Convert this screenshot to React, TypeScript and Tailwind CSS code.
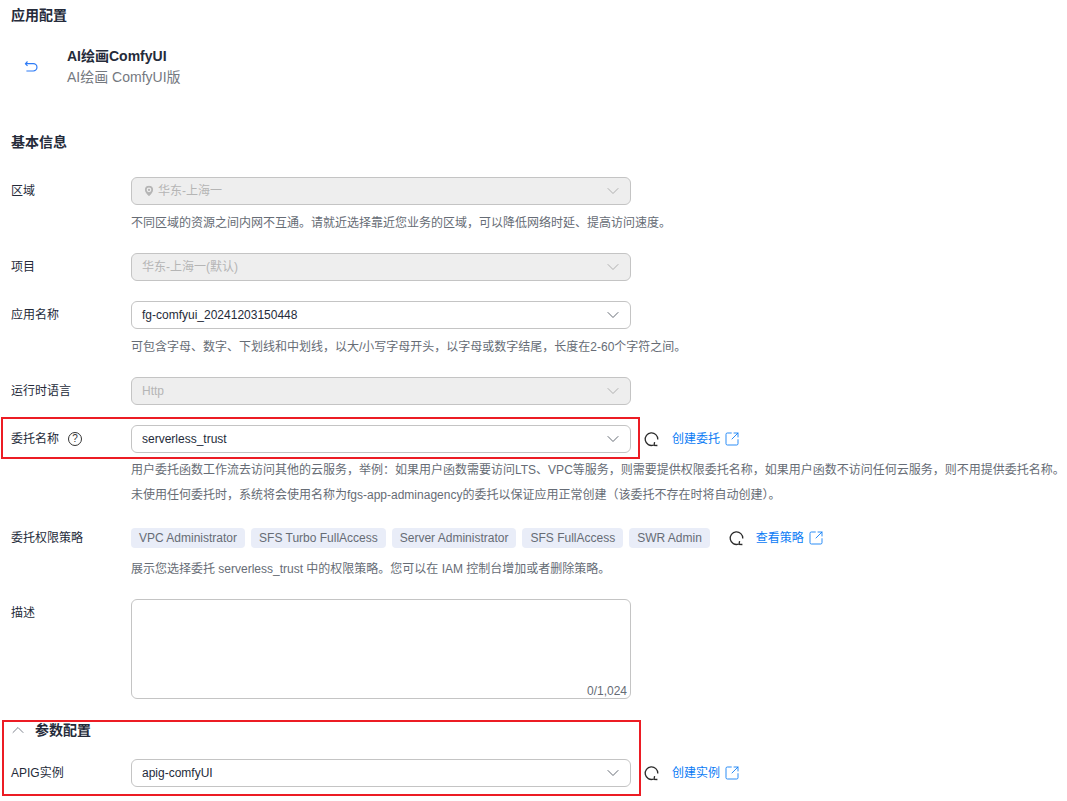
import React from "react";
import { ChevronDown, ChevronUp, MapPin, SquareArrowOutUpRight } from "lucide-react";

const FONT = "font-['Liberation_Sans','Noto_Sans_CJK_SC',sans-serif]";

// small reload ring used next to the selects
const RefreshIcon = () => (
  <svg width="16" height="16" viewBox="0 0 16 16" fill="none" stroke="#2b2b2b" strokeWidth="1.3" className="block">
    <path d="M13.8 8.4A6.3 6.3 0 1 0 9.4 14.2" />
    <path d="M10.6 11.2l-0.6 3.2 3.4 0.1" />
  </svg>
);

const ExternalLink = ({ label }: { label: string }) => (
  <a className="flex items-center text-xs text-[#0a7bf5]">
    {label}
    <SquareArrowOutUpRight size={16} strokeWidth={1.3} className="ml-[4px]" />
  </a>
);

const Hint = ({ children, className = "" }: { children: React.ReactNode; className?: string }) => (
  <p className={`h-5 text-xs leading-5 text-[#666c75] whitespace-nowrap ${className}`}>{children}</p>
);

const Row = ({
  label,
  extra,
  className = "",
  children,
}: {
  label: string;
  extra?: React.ReactNode;
  className?: string;
  children: React.ReactNode;
}) => (
  <div className={`flex ${className}`}>
    <div className="flex h-7 w-[120px] shrink-0 items-center text-xs text-[#252b3a]">
      {label}
      {extra}
    </div>
    <div className="min-w-0">{children}</div>
  </div>
);

const Select = ({
  value,
  disabled,
  icon,
}: {
  value: string;
  disabled?: boolean;
  icon?: boolean;
}) => (
  <div
    className={`flex h-7 w-[500px] items-center rounded-md border border-[#c4c4c4] pl-[10px] pr-[7px] text-xs ${
      disabled ? "bg-[#eeeeee] text-[#b5b5b5]" : "bg-white text-[#252b3a]"
    }`}
  >
    {icon && <MapPin size={14} fill="#b5b5b5" stroke="#eeeeee" strokeWidth={2} className="mr-[2px]" />}
    <span className="flex-1">{value}</span>
    <ChevronDown size={20} strokeWidth={1.2} className={disabled ? "text-[#b0b0b0]" : "text-[#666c75]"} />
  </div>
);

const TAGS = [
  "VPC Administrator",
  "SFS Turbo FullAccess",
  "Server Administrator",
  "SFS FullAccess",
  "SWR Admin",
];

export default function App() {
  return (
    <div className={`relative h-[801px] w-[1067px] overflow-hidden bg-white pl-[11px] pt-[5px] ${FONT}`}>
      <h2 className="h-5 text-sm font-bold leading-5 text-[#252b3a]">应用配置</h2>

      {/* template summary */}
      <div className="mt-[20px] flex h-[42px] items-center">
        <svg width="14" height="14" viewBox="0 0 14 14" fill="none" stroke="#2f7cf6" strokeWidth="1.2" className="ml-[13px] mt-[2px]">
          <path d="M3.5 1.5L1.5 3.7l2 2.1" />
          <path d="M1.7 3.7h7.6a3 3 0 0 1 0 7.3H2.4" />
        </svg>
        <div className="ml-[29px]">
          <div className="h-5 text-sm font-bold leading-5 text-[#252b3a]">AI绘画ComfyUI</div>
          <div className="mt-px h-5 text-sm leading-5 text-[#75797f]">AI绘画 ComfyUI版</div>
        </div>
      </div>

      <h2 className="mt-[45px] h-5 text-sm font-bold leading-5 text-[#252b3a]">基本信息</h2>

      <Row label="区域" className="mt-[25px]">
        <Select value="华东-上海一" disabled icon />
        <Hint className="mt-[8px]">不同区域的资源之间内网不互通。请就近选择靠近您业务的区域，可以降低网络时延、提高访问速度。</Hint>
      </Row>

      <Row label="项目" className="mt-[20px]">
        <Select value="华东-上海一(默认)" disabled />
      </Row>

      <Row label="应用名称" className="mt-5">
        <Select value="fg-comfyui_20241203150448" />
        <Hint className="mt-[8px]">可包含字母、数字、下划线和中划线，以大/小写字母开头，以字母或数字结尾，长度在2-60个字符之间。</Hint>
      </Row>

      <Row label="运行时语言" className="mt-[20px]">
        <Select value="Http" disabled />
      </Row>

      <Row
        label="委托名称"
        className="mt-5"
        extra={
          <span className="ml-[9px] flex h-[14px] w-[14px] items-center justify-center rounded-full border border-[#333] text-[10px] leading-none text-[#333]">
            ?
          </span>
        }
      >
        <div className="flex items-center">
          <Select value="serverless_trust" />
          <span className="ml-[13px] mr-[12px]">
            <RefreshIcon />
          </span>
          <ExternalLink label="创建委托" />
        </div>
        <Hint className="mt-[7px]">用户委托函数工作流去访问其他的云服务，举例：如果用户函数需要访问LTS、VPC等服务，则需要提供权限委托名称，如果用户函数不访问任何云服务，则不用提供委托名称。</Hint>
        <Hint className="mt-[5px]">未使用任何委托时，系统将会使用名称为fgs-app-adminagency的委托以保证应用正常创建（该委托不存在时将自动创建）。</Hint>
      </Row>

      <Row label="委托权限策略" className="mt-[19px]">
        <div className="flex h-7 items-center">
          {TAGS.map((tag) => (
            <span key={tag} className="mr-[6px] flex h-5 items-center rounded bg-[#e9edf8] px-2 text-xs text-[#666c75]">
              {tag}
            </span>
          ))}
          <span className="ml-[13px] mr-[11px]">
            <RefreshIcon />
          </span>
          <ExternalLink label="查看策略" />
        </div>
        <Hint className="mt-[7px]">展示您选择委托 serverless_trust 中的权限策略。您可以在 IAM 控制台增加或者删除策略。</Hint>
      </Row>

      <Row label="描述" className="mt-[20px]">
        <div className="relative h-[100px] w-[500px] rounded-md border border-[#c4c4c4] bg-white">
          <span className="absolute -bottom-px right-[3px] text-xs text-[#666c75]">0/1,024</span>
        </div>
      </Row>

      <div className="mt-[21px] flex h-5 items-center text-sm font-bold text-[#252b3a]">
        <ChevronUp size={20} strokeWidth={1.2} className="-ml-[3px] mr-[7px] text-[#808590]" />
        参数配置
      </div>

      <Row label="APIG实例" className="mt-[19px]">
        <div className="flex items-center">
          <Select value="apig-comfyUI" />
          <span className="ml-[13px] mr-[12px]">
            <RefreshIcon />
          </span>
          <ExternalLink label="创建实例" />
        </div>
      </Row>

      {/* red annotation frames drawn on top of the screenshot */}
      <div className="absolute left-[1px] top-[417px] h-[42px] w-[639px] border-2 border-[#ec1c24]" />
      <div className="absolute left-[2px] top-[720px] h-[76px] w-[639px] border-2 border-[#ec1c24]" />
    </div>
  );
}
